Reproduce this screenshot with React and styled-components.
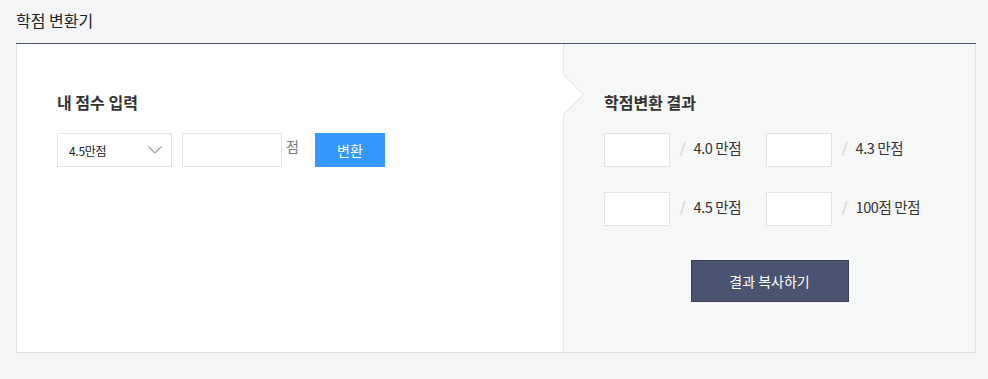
import React from "react";
import styled, { createGlobalStyle } from "styled-components";

const Global = createGlobalStyle`
  html, body { margin: 0; padding: 0; background: #f4f5f7; }
  body { font-family: "Noto Sans CJK KR", "Noto Sans", sans-serif; color: #222; }
  * { box-sizing: border-box; }
`;

const Page = styled.div`
  width: 960px;
  margin-left: 16px;
`;

const Header = styled.h1`
  margin: 0;
  height: 44px;
  padding-top: 9px;
  font-size: 16px;
  font-weight: 400;
  line-height: 22px;
  color: #222;
  border-bottom: 1px solid #4b5069;
`;

const Card = styled.div`
  display: flex;
  height: 309px;
  border: 1px solid #e2e3e5;
  border-top: none;
  background: #fff;
`;

const LeftPanel = styled.section`
  position: relative;
  width: 547px;
  padding: 46px 40px 0 40px;
  background: #fff;
  border-right: 1px solid #e6e7e8;

  &::after {
    content: "";
    position: absolute;
    top: 35.8px;
    right: -15.1px;
    width: 28.28px;
    height: 28.28px;
    background: #fff;
    border-top: 1px solid #e6e7e8;
    border-right: 1px solid #e6e7e8;
    transform: rotate(45deg);
  }
`;

const RightPanel = styled.section`
  flex: 1;
  padding: 46px 40px 0 40px;
  background: #f6f7f7;
  display: flex;
  flex-direction: column;
`;

const Heading = styled.h2`
  margin: 0;
  font-size: 16px;
  font-weight: 700;
  line-height: 24px;
  color: #333;
`;

const ControlRow = styled.div`
  margin-top: 19px;
  display: flex;
  align-items: flex-start;
`;

const SelectBox = styled.div`
  width: 115px;
  height: 34px;
  border: 1px solid #e3e3e3;
  background: #fff;
  display: flex;
  align-items: center;
  justify-content: space-between;
  padding: 0 9px 0 11px;
  font-size: 12px;
  color: #222;
  letter-spacing: -0.3px;
`;

const TextField = styled.div`
  width: ${(p) => p.$w}px;
  height: 34px;
  border: 1px solid #e3e3e3;
  background: #fff;
  flex: none;
`;

const Unit = styled.span`
  margin-left: 4px;
  font-size: 14px;
  line-height: 26px;
  color: #777;
`;

const ConvertButton = styled.button`
  margin-left: 16px;
  width: 70px;
  height: 34px;
  border: none;
  background: #3399ff;
  color: #fff;
  font-family: inherit;
  font-size: 14px;
  padding: 0;
`;

const ResultGrid = styled.div`
  margin-top: 19px;
  display: grid;
  grid-template-columns: 162px 162px;
  row-gap: 25px;
`;

const ResultItem = styled.div`
  display: flex;
  align-items: center;
  height: 34px;
`;

const Slash = styled.span`
  margin-left: 10px;
  margin-bottom: 6px;
  font-size: 14px;
  color: #c8c8c8;
`;

const Label = styled.span`
  margin-left: 8px;
  margin-bottom: 6px;
  font-size: 14.5px;
  color: #333;
  letter-spacing: -0.4px;
`;

const CopyButton = styled.button`
  align-self: center;
  margin-top: 34px;
  width: 158px;
  height: 42px;
  border: 1px solid #3a4057;
  background: #4a536f;
  color: #fff;
  font-family: inherit;
  font-size: 14px;
  padding: 0;
`;

const Chevron = () => (
  <svg width="14" height="8" viewBox="0 0 14 8" fill="none">
    <path d="M0.5 0.5 L7 7 L13.5 0.5" stroke="#999" strokeWidth="1.1" />
  </svg>
);

const results = ["4.0 만점", "4.3 만점", "4.5 만점", "100점 만점"];

export default function App() {
  return (
    <>
      <Global />
      <Page>
        <Header>학점 변환기</Header>
        <Card>
          <LeftPanel>
            <Heading>내 점수 입력</Heading>
            <ControlRow>
              <SelectBox>
                <span>4.5만점</span>
                <Chevron />
              </SelectBox>
              <TextField $w={100} style={{ marginLeft: 10 }} />
              <Unit>점</Unit>
              <ConvertButton>변환</ConvertButton>
            </ControlRow>
          </LeftPanel>
          <RightPanel>
            <Heading>학점변환 결과</Heading>
            <ResultGrid>
              {results.map((r) => (
                <ResultItem key={r}>
                  <TextField $w={66} />
                  <Slash>/</Slash>
                  <Label>{r}</Label>
                </ResultItem>
              ))}
            </ResultGrid>
            <CopyButton>결과 복사하기</CopyButton>
          </RightPanel>
        </Card>
      </Page>
    </>
  );
}
